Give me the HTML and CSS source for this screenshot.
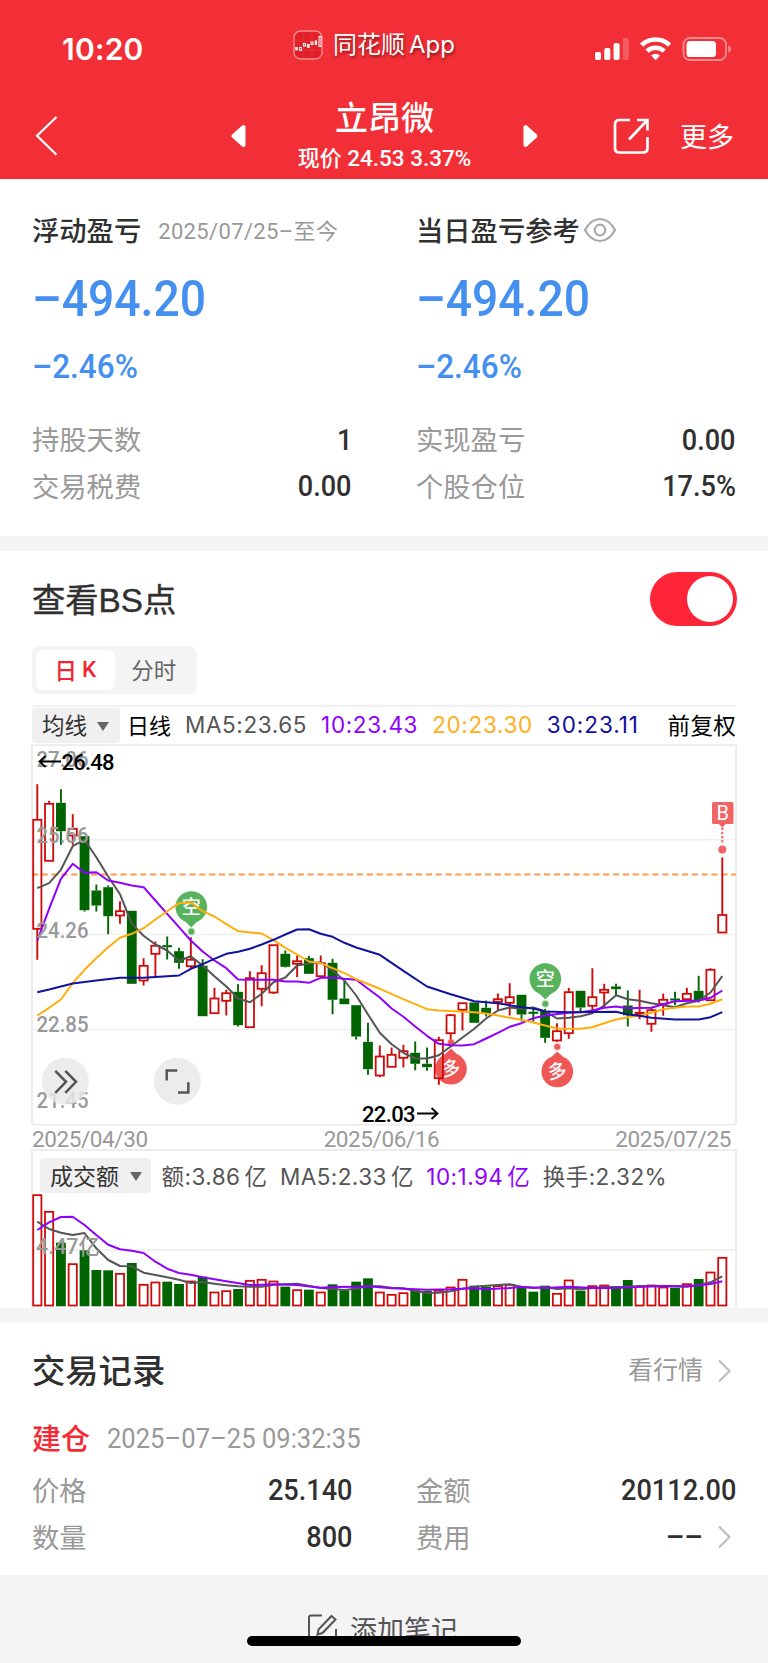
FILE: index.html
```html
<!DOCTYPE html>
<html lang="zh-CN">
<head>
<meta charset="utf-8">
<title>立昂微</title>
<link rel="stylesheet" href="styles.css">
</head>
<body>
<header class="top">
  <div class="status">
    <span class="time">10:20</span>
    <div class="app">
      <svg class="app-icon" width="30" height="30" viewBox="0 0 30 30"><rect x="1" y="1" width="28" height="28" rx="6.5" fill="#e02128" stroke="#f98c8f" stroke-width="1.4"/><path d="M1.5 11h27M1.5 20h27M10 2v26M19 2v26" stroke="#e8383d" stroke-width=".6"/><g fill="#fff"><rect x="2.2" y="17" width="2.4" height="3.300"/><rect x="14" y="14" width="2.600" height="3.800"/><rect x="21.800" y="10.500" width="2.200" height="4.500"/></g><g fill="none" stroke="#fff"><rect x="6.500" y="17.500" width="2" height="3"/><rect x="10.500" y="13.500" width="2" height="2.500"/><rect x="18" y="12" width="2" height="2.500"/><rect x="26" y="6.500" width="2" height="10"/></g></svg>
      <span class="app-cn">同花顺</span><span class="app-en">App</span>
    </div>
    <svg class="signals" width="140" height="30" viewBox="593 33 140 30">
      <g fill="#fff"><rect x="595" y="52" width="6" height="8" rx="1.8"/><rect x="604.3" y="48" width="6" height="12" rx="1.8"/><rect x="613.6" y="43" width="6" height="17" rx="1.8"/><rect x="622.8" y="38" width="6" height="22" rx="1.8" opacity=".22"/></g>
      <g fill="none" stroke="#fff" stroke-width="4.600"><path d="M641.6 45.2a20 20 0 0 1 28 0"/><path d="M647 51.200a12.4 12.4 0 0 1 17.200 0"/></g><path d="M651.2 55.500a6.600 6.600 0 0 1 8.800 0l-4.400 4.800z" fill="#fff"/>
      <rect x="683.5" y="38" width="42.500" height="22" rx="6.5" fill="none" stroke="#fff" stroke-opacity=".45" stroke-width="1.800"/><rect x="686.500" y="41" width="29.500" height="16" rx="3.600" fill="#fff"/><path d="M728.300 45.500c3.600 1 3.600 6 0 7z" fill="#fff" opacity=".45"/>
    </svg>
  </div>
  <nav class="nav">
    <svg class="back" width="24" height="42" viewBox="0 0 24 42" fill="none" stroke="#fff" stroke-width="2.200"><path d="M21.500 2L2 20.700l19.500 19"/></svg>
    <svg class="tri" width="17" height="24" viewBox="0 0 17 24"><path d="M13.500 3v18L3.500 12z" fill="#fff" stroke="#fff" stroke-width="4" stroke-linejoin="round"/></svg>
    <div class="stock"><div class="stock-name">立昂微</div><div class="stock-price">现价 <span>24.53 3.37%</span></div></div>
    <svg class="tri" width="17" height="24" viewBox="0 0 17 24"><path d="M3.500 3v18l10-9z" fill="#fff" stroke="#fff" stroke-width="4" stroke-linejoin="round"/></svg>
    <svg class="share" width="38" height="38" viewBox="0 0 38 38" fill="none" stroke="#fff" stroke-width="2.700"><path d="M18 3H7.500Q3 3 3 7.500V31q0 4.500 4.500 4.500H31q4.500 0 4.500-4.500V20M25 3h10.500v10.500M35.500 3L17 22.500"/></svg>
    <span class="more">更多</span>
  </nav>
</header>

<section class="summary">
  <div class="col">
    <div class="head"><b>浮动盈亏</b><span class="since">2025/07/25–<i>至今</i></span></div>
    <div class="big">–494.20</div>
    <div class="pct">–2.46%</div>
    <div class="row"><span>持股天数</span><strong>1</strong></div>
    <div class="row"><span>交易税费</span><strong>0.00</strong></div>
  </div>
  <div class="col">
    <div class="head"><b>当日盈亏参考</b><svg class="eye" width="34" height="26" viewBox="0 0 34 26" fill="none" stroke="#aaa" stroke-width="2.200"><path d="M2 13Q8 2 17 2t15 11Q26 24 17 24T2 13z"/><circle cx="17" cy="13" r="5.300"/></svg></div>
    <div class="big">–494.20</div>
    <div class="pct">–2.46%</div>
    <div class="row"><span>实现盈亏</span><strong>0.00</strong></div>
    <div class="row"><span>个股仓位</span><strong>17.5%</strong></div>
  </div>
</section>

<section class="market">
  <div class="bs"><h2>查看<span>BS</span>点</h2><div class="switch"><div class="knob"></div></div></div>
  <div class="tabs"><span class="tab on">日<em>K</em></span><span class="tab">分时</span></div>
  <div class="ma">
    <span class="chip">均线<i class="caret"></i></span>
    <span class="line-name">日线</span><span class="m5">MA5:23.65</span><span class="m10">10:23.43</span><span class="m20">20:23.30</span><span class="m30">30:23.11</span><span class="adj">前复权</span>
  </div>
  <svg id="price" class="price" width="706" height="382" viewBox="31 743.500 706 382"></svg>
  <div class="dates"><span>2025/04/30</span><span>2025/06/16</span><span>2025/07/25</span></div>
  <div class="volume">
    <div class="vol-head"><span class="chip">成交额<i class="caret"></i></span><span>额:3.86<u></u>亿</span><span>MA5:2.33<u></u>亿</span><span class="m10">10:1.94<u></u>亿</span><span>换手:2.32%</span></div>
    <svg id="volume" width="706" height="115" viewBox="31 1193 706 115"></svg>
  </div>
</section>

<section class="records">
  <div class="rec-head"><h2>交易记录</h2><span class="link">看行情<svg class="arrow" width="15" height="24" viewBox="0 0 15 24" fill="none" stroke="#bfbfbf" stroke-width="2.200"><path d="M2 1.500l10.500 10.500L2 22.500"/></svg></span></div>
  <div class="opened"><b>建仓</b><span>2025–07–25 09:32:35</span></div>
  <div class="grid">
    <div class="row"><span>价格</span><strong>25.140</strong></div>
    <div class="row"><span>金额</span><strong>20112.00</strong></div>
    <div class="row"><span>数量</span><strong>800</strong></div>
    <div class="row"><span>费用</span><strong class="fee">––<svg class="arrow" width="15" height="24" viewBox="0 0 15 24" fill="none" stroke="#bfbfbf" stroke-width="2.200"><path d="M2 1.500l10.500 10.500L2 22.500"/></svg></strong></div>
  </div>
</section>

<footer class="note">
  <svg width="32" height="32" viewBox="0 0 32 32" fill="none" stroke="#555" stroke-width="2"><path d="M15 2.500H4q-2 0-2 2V28q0 2 2 2h23q2 0 2-2V16"/><path d="M24.500 3l4 3.500L15.500 20l-5 1.500 1-5z"/></svg>
  <span>添加笔记</span>
  <div class="home"></div>
</footer>
<script src="script.js"></script>
</body>
</html>
```

FILE: styles.css
```css
* { box-sizing: border-box; }
body { margin: 0; width: 768px; height: 1663px; overflow: hidden; background: #f4f4f4; font-family: Roboto, "Noto Sans CJK SC", sans-serif; color: #303030; }
h2, b, i, em, u { font-style: normal; text-decoration: none; margin: 0; }
svg { display: block; flex: none; }
span, strong, b { white-space: nowrap; }

.top { height: 179px; background: #f22f37; color: #fff; }
.status { height: 92px; display: flex; align-items: flex-start; padding: 30px 35px 0 62px; }
.time { font: 600 30px/38px Inter, sans-serif; width: 231px; letter-spacing: .2px; }
.app { display: flex; width: 300px; height: 30px; align-items: center; }
.app-cn { font-size: 24px; line-height: 28px; margin: 0 0 1px 10px; text-shadow: 1px 2px 3px rgba(70, 0, 0, .6); }
.app-en { font: 24px/28px Inter, sans-serif; margin: 0 0 0 4px; text-shadow: 1px 2px 3px rgba(70, 0, 0, .6); }
.signals { margin-top: 3px; }
.nav { height: 87px; display: flex; align-items: center; padding: 0 34px 0 35px; }
.back { margin-right: 171px; }
.stock { width: 278px; height: 87px; text-align: center; padding-top: 4px; }
.stock-name { font-size: 33px; font-weight: 500; line-height: 46px; }
.stock-price { font-size: 22px; font-weight: 500; line-height: 34px; margin-top: -1px; }
.stock-price span { font-size: 22.500px; }
.share { margin-left: 73px; }
.more { font-size: 27px; margin: 0 0 1px 30px; }

.summary { height: 357px; background: #fff; padding: 30px 33px 0 32px; display: grid; grid-template-columns: 319px 319px; gap: 65px; }
.head { height: 39px; display: flex; align-items: center; }
.head b { font-size: 27.300px; font-weight: 500; }
.since { font-size: 22px; color: #999; margin-left: 17px; letter-spacing: .35px; }
.eye { margin: 2px 0 0 3px; }
.big { font-size: 50px; font-weight: 500; color: #448fef; line-height: 60px; margin-top: 21px; transform: scaleX(.925); transform-origin: 0 50%; }
.pct { font-size: 33.500px; font-weight: 500; color: #448fef; line-height: 40px; margin: 18px 0 29px; transform: scaleX(.94); transform-origin: 0 50%; }
.row { display: flex; justify-content: space-between; align-items: center; height: 46.500px; font-size: 27.300px; color: #999; }
.row > span { margin-bottom: 2px; }
.row strong { font-size: 29px; font-weight: 500; color: #303030; margin: 1px -1px 0 0; transform: scaleX(.935); transform-origin: 100% 50%; }

.market { height: 757px; margin-top: 15px; background: #fff; padding: 21px 31px 0; }
.bs { display: flex; justify-content: space-between; height: 54px; align-items: center; padding-left: 1px; }
h2 { font-size: 33.300px; font-weight: 500; margin-bottom: 4px; }
.bs h2 { font-weight: 400; -webkit-text-stroke: .4px; }
.bs h2 span { font-family: "Liberation Sans", sans-serif; }
.switch { width: 87px; height: 54px; border-radius: 27px; background: #ff2538; padding: 4px; display: flex; justify-content: flex-end; }
.knob { width: 46px; height: 46px; border-radius: 50%; background: #fff; }
.tabs { width: 165px; height: 48px; margin: 20px 0 0 1px; padding: 4px; border-radius: 8px; background: #f4f4f4; display: flex; }
.tab { flex: 1; display: flex; align-items: center; justify-content: center; font-size: 22.500px; color: #666; border-radius: 7px; padding: 0 0 3px; }
.tab.on { background: #fff; color: #f0252f; font-weight: 500; }
.tab em { margin: 1px 0 0 5px; }
.ma { width: 704px; height: 39px; margin: 11px 0 0 1px; border-top: 2px solid #f0f0f0; font: 22.500px Inter, "Noto Sans CJK SC", sans-serif; display: flex; align-items: center; color: #000; }
.ma > span:not(.chip) { margin-bottom: 3px; }
.chip { height: 35px; border-radius: 4px; background: #f0f0f0; color: #333; display: flex; align-items: center; padding-bottom: 2px; }
.ma .chip { width: 88px; padding: 0 0 3px 10px; }
.caret { border: 6.500px solid transparent; border-top: 9px solid #666; border-bottom: 0; margin: 4px 0 0 10px; }
.ma .line-name { margin-left: 7px; font-size: 22px; }
.ma .m5 { color: #555; margin-left: 14px; letter-spacing: .6px; }
.ma .m10, .ma .m20, .ma .m30 { margin-left: 14px; letter-spacing: .65px; }
.ma .m30 { letter-spacing: .95px; }
.m10 { color: #9000ff; }
.m20 { color: #ffae1a; }
.m30 { color: #10109c; }
.ma .adj { margin-left: auto; letter-spacing: .3px; }
.price { height: 382px; }
.dates { width: 706px; height: 23px; padding: 2px 6px 0 1px; display: flex; justify-content: space-between; align-items: center; color: #999; font-size: 22.500px; letter-spacing: -.4px; }
.volume { width: 706px; height: 159px; border: 2px solid #ededed; border-bottom: 0; }
.volume svg { margin-left: -2px; }
.vol-head { height: 42px; display: flex; align-items: center; padding: 7px 0 0 7px; gap: 12.500px; font: 22.500px Inter, "Noto Sans CJK SC", sans-serif; color: #555; letter-spacing: .45px; }
.vol-head > span:not(.chip) { margin-bottom: 2px; }
.vol-head .chip { width: 111px; padding-left: 10px; margin-right: -2px; font-size: 23px; letter-spacing: 0; }
.vol-head .caret { margin-left: 11px; }
.vol-head u { display: inline-block; width: 4px; }
.vol-head .m10 { color: #9000ff; }

.records { height: 252px; margin-top: 15px; background: #fff; padding: 23px 33px 0 32px; }
.rec-head { display: flex; justify-content: space-between; height: 48px; align-items: center; }
.link { display: flex; align-items: center; color: #999; font-size: 25px; line-height: 30px; margin-top: 1px; }
.arrow { margin: 0 3px 0 14px; }
.opened { height: 48px; display: flex; align-items: center; margin-top: 20px; }
.opened b { font-size: 29px; font-weight: 500; color: #f52a32; margin-bottom: 3px; }
.opened span { font-size: 27.500px; color: #999; margin-left: 17px; transform: scaleX(.93); transform-origin: 0 50%; }
.grid { display: grid; grid-template-columns: 319px 319px; column-gap: 65px; margin-top: 4px; }
.grid .row { height: 47px; }
.row .fee { display: flex; align-items: center; transform: none; margin-right: 0; }
.note { height: 88px; position: relative; display: flex; justify-content: center; padding: 38px 3px 0 0; color: #555; font-size: 27px; line-height: 36px; }
.note span { margin-left: 11px; }
.home { position: absolute; left: 247px; top: 61px; width: 274px; height: 10px; border-radius: 5px; background: #000; }

.axis { font-size: 22px; font-weight: 500; fill: #999; font-family: Roboto, "Noto Sans CJK SC", sans-serif; }
.extreme { font-size: 22px; font-weight: 500; fill: #000; }
.glyph { font-size: 19px; font-weight: 500; fill: #fff; text-anchor: middle; }
.buy { font-size: 20px; fill: #fff; text-anchor: middle; }
```

FILE: script.js
```js
const STEP = 11.81, X0 = 37.3;
const x = i => X0 + i * STEP;
const RED = '#cf0a0a', GREEN = '#006400';

// direction, high, body top, body bottom, low
const candles = `r 783.7 819.3 928.3 959.3|r 800.3 803.3 860.3 860.3|g 788.7 802.3 830.7 844.3|r 813.7 828.3 835 844.3|g 835.7 835.7 909.7 911|g 884 890 905 911|g 885 886.7 915.7 933.7|r 900.7 910.7 915 923.3|g 910.3 910.3 983.3 983.3|r 957.7 965.3 980 985|r 941 945.3 953.3 976.7|g 936 944.7 946.7 959|g 947.3 950.7 962.3 968.3|r 936.7 959.3 965.7 968.3|g 958.7 965.3 1015.7 1015.7|r 987.3 998 1012.7 1012.7|r 989.3 992.7 1000.3 1015|g 983.7 991.3 1024.7 1026|r 970.7 977.7 1026.7 1026.7|r 964.7 972.7 988.3 1005.7|r 944.7 944.7 992 993.5|g 950 953.3 966.3 967|r 955 960.7 963.3 976.7|g 955.3 957.7 973.3 973.3|r 955 962.7 975.7 975.7|g 958.3 962.3 999.3 1013.7|g 979.3 998 1003.7 1003.7|g 1004.7 1004.7 1036 1039|g 1022.3 1041.3 1068.7 1074.3|r 1045 1056 1075 1076.7|r 1047 1054.3 1066.3 1066.3|r 1044.3 1050.7 1057.3 1067|g 1041 1052.3 1063.3 1069.7|g 1047 1063.3 1066.7 1070.3|r 1036.3 1039.7 1077.7 1084.3|r 1013.5 1014.7 1032.7 1039|r 1002.7 1002.7 1009.3 1030|g 1002 1002 1022.3 1022.3|g 1000 1007.3 1013 1016|r 993 998.7 1001.3 1010|r 982.7 996.7 1002.3 1015|g 994.3 994.3 1014 1021|g 1008.3 1011.3 1012.7 1021|g 1008.3 1010.3 1037.3 1042.3|r 1022.7 1030.7 1040 1041.5|r 987.3 991.7 1032.7 1038.3|g 990.3 990.3 1007 1011.7|r 967.7 996.7 1005.3 1010|r 983.3 989.3 992 1007.7|g 983.3 986 988.7 995|g 990 1005 1014.7 1026|r 989.3 1012.3 1013.7 1018.7|r 1007.3 1009.7 1023.3 1031.3|r 993 999.3 1003.3 1015.3|g 991.3 998 999.3 1004.7|r 987.3 993.3 998.7 1000|g 975.3 990.3 1000 1002|r 967.7 969.3 999.7 1000.5|r 857 914.5 932 932`
  .split('|').map(s => { const [d, ...v] = s.split(' '); return { d, v: v.map(Number) }; });

const body = (d, cx, top, bottom) => d === 'g'
  ? `<rect x="${cx - 4.9}" y="${top}" width="9.8" height="${Math.max(2, bottom - top)}" fill="${GREEN}"/>`
  : `<rect x="${cx - 4.1}" y="${top}" width="8.2" height="${Math.max(1, bottom - top)}" fill="none" stroke="${RED}" stroke-width="1.8"/>`;

const candle = ({ d, v: [h, t, b, l] }, i) => {
  const cx = x(i);
  const wick = (a, z) => z > a ? `<path d="M${cx} ${a}V${z}" stroke="${d === 'g' ? GREEN : RED}" stroke-width="1.9"/>` : '';
  return wick(h, t) + wick(b, l) + body(d, cx, t, b);
};

const line = (pts, color, f = v => v) =>
  `<path d="M${pts.split(' ').map(p => { const [i, y] = p.split(':').map(Number); return `${x(i).toFixed(1)} ${f(y).toFixed(1)}`; }).join('L')}" fill="none" stroke="${color}" stroke-width="2" stroke-linejoin="round"/>`;

const seq = s => s.split(' ').map((v, i) => i + ':' + v).join(' ');

const pin = (cx, cy, tip, dot, color, label) => {
  const s = tip > cy ? 1 : -1;
  return `<g opacity=".93"><circle cx="${cx}" cy="${cy}" r="15.800" fill="${color}"/><path d="M${cx - 7} ${cy + s * 13.5}L${cx} ${tip}L${cx + 7} ${cy + s * 13.5}z" fill="${color}"/><circle cx="${cx}" cy="${dot}" r="4" fill="${color}" opacity=".3"/><circle cx="${cx}" cy="${dot}" r="2.900" fill="${color}"/></g><text class="glyph" x="${cx}" y="${cy + 6.5}"${s < 0 ? ` transform="rotate(-8 ${cx} ${cy})"` : ''}>${label}</text>`;
};

const axis = (y, t) => `<text class="axis" x="36.5" y="${y}" textLength="52" lengthAdjust="spacingAndGlyphs">${t}</text>`;

document.getElementById('price').innerHTML =
  [839.3, 934, 1029].map(y => `<path d="M32 ${y}H736" stroke="#f0f0f0" stroke-width="1.5"/>`).join('') +
  `<rect x="32" y="744.700" width="704" height="379.500" fill="none" stroke="#ededed" stroke-width="2"/>` +
  `<path d="M31.800 874H736" stroke="#ff9a4a" stroke-width="2.200" stroke-dasharray="6.200 3.650"/>` +
  pin(191.3, 906.5, 927, 931, '#4caf50', '空') + pin(545.3, 978.5, 999, 1003.300, '#4caf50', '空') +
  pin(451, 1068.3, 1048, 1042, '#ee4a4a', '多') + pin(557.3, 1071, 1051, 1046.3, '#ee4a4a', '多') +
  candles.map(candle).join('') +
  line(seq('887.7 882.7 869.3 845.7 839.3 856.7 876 893.7 923.3 935.3 944 950 960.3 955.7 965 975.7 986 998 1001.7 993.3 981.7 977 965 963 961.7 970 980 995 1014 1032.3 1043.7 1052.3 1058 1058 1054.7 1046 1037 1028.3 1018 1010 1007 1008.3 1007 1010.7 1018 1017.3 1015.7 1012.7 1005 994.7 998.7 1000.3 1002.7 1004.7 1006.7 1002.7 1000.3 992 975.7'), '#555') +
  line('0:940 1:908.3 2:878.3 3:863.3 4:872.3 5:871.7 6:880 7:882.3 8:885 9:886.7 10:900 11:913.3 12:926.7 13:940 14:951 15:960 16:967.7 17:979 20:979.3 21:981 22:981 23:982.3 24:977.3 25:977 26:978.3 27:979.3 28:988.3 29:997 30:1008 31:1016.3 32:1026 33:1035.3 34:1043.3 35:1044.7 36:1045 37:1043.7 38:1038 39:1032.3 40:1026.3 41:1022.7 42:1017.7 43:1015 45:1012.3 46:1011.7 47:1010 48:1007.3 49:1006 50:1007.7 52:1007.3 53:1003.7 54:1000.7 56:1000 57:997.3 58:990', '#9000ff') +
  line('0:1015 1:1007.3 2:999 3:982.7 4:969.3 5:957.7 6:946.7 7:937.3 8:933.3 9:927.7 10:919 11:910.7 12:902.7 13:901.7 14:910.7 15:916 16:923.7 17:930.7 19:933 20:939.7 21:947.3 22:954 23:961 24:962.7 25:967.7 26:972.7 27:978.7 29:988.3 31:998.7 33:1008.7 34:1010 37:1011.7 38:1013 39:1015 40:1017.3 41:1019.3 42:1022 43:1025 44:1028 46:1028.3 47:1026.7 48:1022.7 49:1019 50:1016.7 51:1015 52:1012.3 53:1008.7 54:1007.3 55:1006 56:1006 57:1003.3 58:998.7', '#ffae0c') +
  line('0:991.7 1:989 2:986 3:983 5:980 7:977.3 9:977.3 12:975 13:968.3 14:963.7 15:958.3 16:953.3 17:951.3 18:948.3 19:944 20:939.3 21:934 22:929 23:928.7 24:933.3 25:936.3 26:942.3 27:947 29:954.3 31:970.3 33:986 35:993.7 37:1000.7 39:1002.7 41:1006.7 42:1008 43:1011 45:1011.7 49:1011.3 50:1014 51:1015.3 52:1017.3 54:1019 56:1019 57:1016.7 58:1011.7', '#1212a0') +
  axis(766.7, '27.06') + axis(842, '25.66') + axis(937, '24.26') + axis(1031.7, '22.85') + axis(1107.7, '21.45') +
  `<g fill="none" stroke="#000" stroke-width="1.800"><path d="M61 761H40M45.500 755.500L39.500 761l6 5.500"/><path d="M417 1113h20M431.500 1107.500l6 5.500-6 5.500"/></g>` +
  `<text class="extreme" x="61.500" y="769.300" textLength="53">26.48</text><text class="extreme" x="362" y="1121" textLength="53.500">22.03</text>` +
  `<g fill="#e9e9e9" opacity=".82"><circle cx="65.300" cy="1080.700" r="23.500"/><circle cx="177.300" cy="1080.700" r="23.500"/></g>` +
  `<g fill="none" stroke="#555" stroke-width="2.500"><path d="M55.300 1070.300l10.700 11-10.700 11M65.300 1070.300l10.700 11-10.700 11M166.700 1080v-10h10.500M188.300 1081.700v10.300h-10.300"/></g>` +
  `<g fill="#f06464"><rect x="712" y="801.500" width="21.500" height="22" rx="1.500"/><path d="M718.300 823h8l-4 4z"/><circle cx="722.300" cy="849" r="4"/></g><path d="M722.300 827v15" stroke="#f06464" stroke-width="2" stroke-dasharray="2.500 1.700"/>` +
  `<text class="buy" x="722.700" y="819.700">B</text>`;

const vy = v => 1120 + v / 3;
const vols = '224 274 368 431 391 450 451 460 429 493 486 485 492 483 470 516 512 507 481 478 483 500 509 509 516 493 511 485 475 516 523 518 511 513 511 501 478 497 500 497 493 502 515 497 520 480 512 497 495 500 480 499 495 501 504 491 477 456 412'.split(' ').map(Number);

document.getElementById('volume').innerHTML =
  `<path d="M32 1250H736" stroke="#ededed" stroke-width="1.500"/>` +
  vols.map((v, i) => { const r = candles[i].d === 'r'; return body(candles[i].d, x(i), vy(v) + (r ? .5 : 0), r ? 1305.5 : 1306.3); }).join('') +
  line('0:305 1:327 2:338 3:345 4:339 5:385 6:420 7:438 8:439 9:458 10:465 11:472 12:479 13:489 14:486 15:491 16:496 17:499 18:500 19:500 20:494 22:491 24:504 26:510 27:506 28:498 29:499 30:503 31:505 32:513 33:519 34:518 35:514 36:506 37:500 38:497 40:493 41:500 42:504 43:501 44:507 45:505 46:508 47:504 48:501 50:500 51:498 53:499 55:500 56:495 57:487 58:469', '#555', vy) +
  line('0:330 1:307 2:291 3:290 4:315 5:345 6:374 7:388 8:392 9:399 10:425 11:446 12:459 13:464 14:472 16:484 18:495 19:494 20:493 22:495 24:503 25:501 27:500 28:499 30:505 32:508 33:509 35:508 37:505 38:508 40:504 41:501 43:504 45:500 47:504 49:504 51:500 53:498 55:499 56:496 57:492 58:484', '#9000ff', vy) +
  `<text class="axis" x="36" y="1253.500" textLength="64" lengthAdjust="spacingAndGlyphs">4.47亿</text>`;
```
